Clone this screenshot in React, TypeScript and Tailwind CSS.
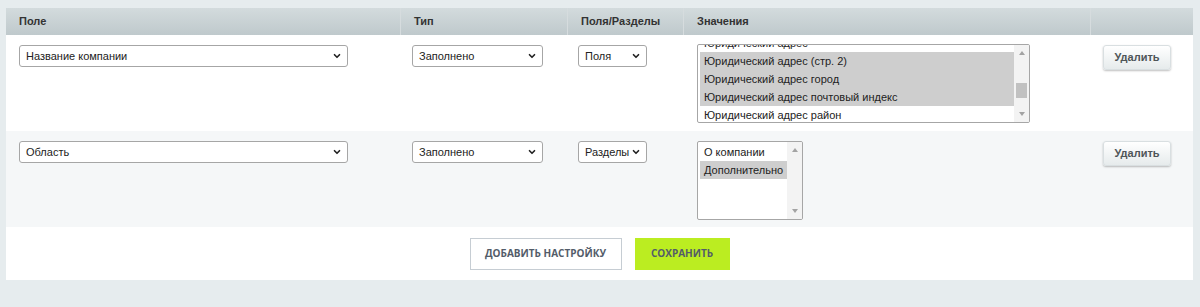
import React from 'react';
import { ChevronDown } from 'lucide-react';

const COLS = 'grid grid-cols-[394px_167px_116px_407px_103px]';

type SelectProps = { value: string; width: string };

const FakeSelect = ({ value, width }: SelectProps) => (
    <div className={`${width} h-[22px] flex items-center justify-between pl-[6px] pr-[5px] bg-white border border-[#a6a6a6] rounded-[3px] text-[11px] text-[#222]`}>
        <span className="whitespace-nowrap">{value}</span>
        <ChevronDown size={10} strokeWidth={4} className="text-[#222] shrink-0" />
    </div>
);

type ListProps = {
    items: { label: string; selected?: boolean }[];
    width: string;
    offset: string;
    thumb?: boolean;
};

// listbox drawn by hand so the scroll position matches
const ListBox = ({ items, width, offset, thumb }: ListProps) => (
    <div className={`${width} h-[79px] flex bg-white border border-[#a6a6a6] rounded-[2px] overflow-hidden text-[11px] text-[#222]`}>
        <div className="flex-1 overflow-hidden pl-[2px] pt-[1px]">
            <div className={offset}>
                {items.map((it, i) => (
                    <div
                        key={i}
                        className={`h-[18px] leading-[18px] pl-[4px] whitespace-nowrap ${it.selected ? 'bg-[#cecece]' : ''}`}
                    >
                        {it.label}
                    </div>
                ))}
            </div>
        </div>
        <div className="w-[15px] flex flex-col items-center bg-[#f3f3f3] py-[3px]">
            <div className="w-0 h-0 border-l-[3px] border-r-[3px] border-b-[4px] border-l-transparent border-r-transparent border-b-[#a3a3a3] mt-[3px]" />
            <div className="flex-1 w-full flex flex-col">
                {thumb && <div className="mt-[28px] mx-[2px] h-[15px] bg-[#c1c1c1]" />}
            </div>
            <div className="w-0 h-0 border-l-[3px] border-r-[3px] border-t-[4px] border-l-transparent border-r-transparent border-t-[#a3a3a3] mb-[3px]" />
        </div>
    </div>
);

const DeleteButton = () => (
    <button className="w-[68px] h-[25px] rounded-[3px] bg-gradient-to-b from-white to-[#e6ebec] shadow-[0_1px_2px_rgba(0,0,0,0.25)] border border-[#d9dfe1] text-[11px] font-bold text-[#4f5558]">
        Удалить
    </button>
);

const HeadCell = ({ children, line }: { children?: React.ReactNode; line?: boolean }) => (
    <div className={`h-[27px] flex items-center pl-[13px] text-[11px] font-bold text-[#333] ${line ? 'border-l border-[#d6dcde]' : ''}`}>
        {children}
    </div>
);

const addressItems = [
    { label: 'Юридический адрес' },
    { label: 'Юридический адрес (стр. 2)', selected: true },
    { label: 'Юридический адрес город', selected: true },
    { label: 'Юридический адрес почтовый индекс', selected: true },
    { label: 'Юридический адрес район' },
];

const sectionItems = [
    { label: 'О компании' },
    { label: 'Дополнительно', selected: true },
];

const App: React.FC = () => {
    return (
        <div className="w-[1200px] h-[307px] bg-[#e6ecee] pt-[8px] pl-[6px] font-['Liberation_Sans',Arial,sans-serif]">
            <div className="w-[1187px] bg-white">
                {/* header */}
                <div className={`${COLS} bg-gradient-to-b from-[#d3dbdd] to-[#bfc9cc]`}>
                    <HeadCell>Поле</HeadCell>
                    <HeadCell line>Тип</HeadCell>
                    <HeadCell line>Поля/Разделы</HeadCell>
                    <HeadCell line>Значения</HeadCell>
                    <HeadCell line />
                </div>

                {/* row 1 */}
                <div className={`${COLS} h-[96px] bg-white`}>
                    <div className="pl-[13px] pt-[10px]">
                        <FakeSelect value="Название компании" width="w-[329px]" />
                    </div>
                    <div className="pl-[12px] pt-[10px]">
                        <FakeSelect value="Заполнено" width="w-[131px]" />
                    </div>
                    <div className="pl-[11px] pt-[10px]">
                        <FakeSelect value="Поля" width="w-[69px]" />
                    </div>
                    <div className="pl-[14px] pt-[9px]">
                        <ListBox items={addressItems} width="w-[333px]" offset="-mt-[12px]" thumb />
                    </div>
                    <div className="pl-[13px] pt-[9px]">
                        <DeleteButton />
                    </div>
                </div>

                {/* row 2 */}
                <div className={`${COLS} h-[96px] bg-[#f5f7f8]`}>
                    <div className="pl-[13px] pt-[10px]">
                        <FakeSelect value="Область" width="w-[329px]" />
                    </div>
                    <div className="pl-[12px] pt-[10px]">
                        <FakeSelect value="Заполнено" width="w-[131px]" />
                    </div>
                    <div className="pl-[11px] pt-[10px]">
                        <FakeSelect value="Разделы" width="w-[69px]" />
                    </div>
                    <div className="pl-[14px] pt-[10px]">
                        <ListBox items={sectionItems} width="w-[106px]" offset="mt-0" />
                    </div>
                    <div className="pl-[13px] pt-[9px]">
                        <DeleteButton />
                    </div>
                </div>

                {/* footer */}
                <div className="h-[53px] flex items-center justify-center gap-[13px] font-['Open_Sans',sans-serif] text-[10px] font-bold text-[#535c69]">
                    <button className="w-[152px] h-[32px] bg-white border border-[#c6cdd3] uppercase">Добавить настройку</button>
                    <button className="w-[95px] h-[32px] bg-[#bbed21] uppercase">Сохранить</button>
                </div>
            </div>
        </div>
    );
};

export default App;
